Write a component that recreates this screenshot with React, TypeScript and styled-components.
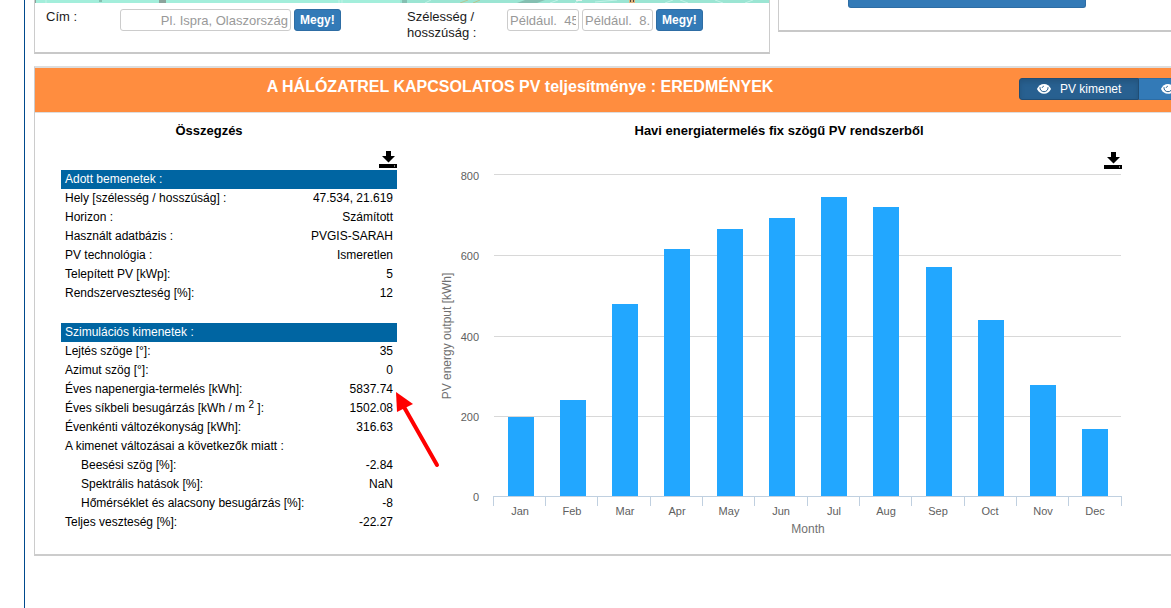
import React from "react";
import styled, { createGlobalStyle } from "styled-components";

const GlobalStyle = createGlobalStyle`
  * { box-sizing: border-box; }
  body {
    margin: 0;
    background: #fff;
    color: #000;
    font: 12px/18px "Liberation Sans", Arial, sans-serif;
    overflow: hidden;
  }
`;

const Page = styled.main`
  margin-left: 24px;
  padding-left: 9px;
  min-height: 100vh;
  border-left: 1px solid #004a8d;
  overflow: hidden;
`;

const TopRow = styled.div`
  display: grid;
  grid-template-columns: 736fr 393fr;
  gap: 8px;
  align-items: start;
`;

const Panel = styled.section`
  border: 1px solid #ccc;
  border-top: 0;
  border-bottom: 2px solid #c8c8c8;
`;

const SidePanel = styled(Panel)`
  border-right: 0;
  height: 32px;
  padding-left: 69px;
`;

const MapStrip = styled.svg`
  display: block;
  width: 100%;
  height: 3px;
  background: #a3eedb;
`;

const LocationForms = styled.div`
  display: flex;
  padding: 6px 11px 7px;
  min-height: 49px;
`;

const Form = styled.form<{ $basis: number; $labelWidth: number }>`
  display: flex;
  align-items: flex-start;
  gap: 3px;
  flex: 0 0 ${(p) => p.$basis}px;

  label {
    width: ${(p) => p.$labelWidth - 3}px;
    font-size: 13px;
    line-height: 16px;
    color: #1a1a1a;
  }
`;

const TextInput = styled.input<{ $width: number; $align?: string }>`
  width: ${(p) => p.$width}px;
  height: 22px;
  padding: 0 2px;
  border: 1px solid #ccc;
  border-radius: 3px;
  font: inherit;
  font-size: 13px;
  text-align: ${(p) => p.$align || "left"};

  &::placeholder {
    color: #999;
    opacity: 1;
  }
`;

const Button = styled.button`
  height: 22px;
  padding: 0 5px;
  border: 1px solid #2e6da4;
  border-radius: 3px;
  background: #337ab7;
  color: #fff;
  font: bold 12px/18px "Liberation Sans", Arial, sans-serif;
  white-space: nowrap;
`;

const WideButton = styled(Button)`
  display: block;
  width: 238px;
  height: 8px;
  border-top: 0;
  border-radius: 0 0 3px 3px;
`;

const Results = styled.section`
  margin-top: 12px;
  border: solid #ccc;
  border-width: 2px 0 2px 1px;
  border-top-color: #ddd;
`;

const ResultsHeader = styled.header`
  display: flex;
  height: 45px;
  padding-top: 10px;
  border-bottom: 1px solid #ddd;
  background: #ff8d3f;
`;

const Title = styled.h1`
  flex: 1;
  margin: 0;
  padding-right: 14px;
  color: #fff;
  font-size: 16px;
  line-height: 18px;
  text-align: center;
`;

const ButtonGroup = styled.div`
  display: flex;
  width: 152px;
  overflow: hidden;
`;

const TabButton = styled(Button)<{ $active?: boolean }>`
  display: flex;
  flex: none;
  align-items: center;
  gap: 9px;
  width: 120px;
  padding: 0 17px;
  font-weight: normal;
  border-radius: ${(p) => (p.$active ? "3px 0 0 3px" : "0")};
  border-color: ${(p) => (p.$active ? "#204d74" : "#2e6da4")};
  border-left-width: ${(p) => (p.$active ? "1px" : "0")};
  background: ${(p) => (p.$active ? "#286090" : "#337ab7")};
  box-shadow: ${(p) => (p.$active ? "inset 0 3px 5px rgba(0, 0, 0, 0.125)" : "none")};
  padding-left: ${(p) => (p.$active ? "17px" : "22px")};

  svg { flex: none; }
`;

const ResultsBody = styled.div`
  display: flex;
  gap: 35px;
  padding: 9px 45px 14px 26px;
`;

const Summary = styled.div`
  width: 336px;
  flex: none;
`;

const Heading = styled.h2<{ $inset?: number }>`
  margin: 0;
  padding-right: ${(p) => p.$inset || 0}px;
  font-size: 13px;
  line-height: 18px;
  text-align: center;
`;

const IconButton = styled.button`
  display: block;
  width: 18px;
  height: 18px;
  padding: 0;
  border: 0;
  background: none;
`;

const Tools = styled.div`
  display: flex;
  justify-content: flex-end;
  height: 30px;
  padding-top: 10px;
`;

const DataTable = styled.table`
  width: 100%;
  border-collapse: collapse;
  margin-bottom: 20px;

  &:last-of-type { margin-bottom: 0; }

  th, td {
    height: 19px;
    padding: 0 4px;
    font-weight: normal;
    line-height: 19px;
    text-align: left;
    white-space: nowrap;
  }
  thead th {
    background: #0065a2;
    color: #fff;
  }
  td { text-align: right; }
  sup { line-height: 0; font-size: 10px; vertical-align: 4px; }
`;

const RowLabel = styled.span<{ $indent?: boolean }>`
  padding-left: ${(p) => (p.$indent ? 16 : 0)}px;
`;

const ChartArea = styled.div`
  position: relative;
  flex: 1;
  min-width: 0;
`;

const ChartDownload = styled(IconButton)`
  position: absolute;
  top: 29px;
  right: 4px;
`;

const ChartSvg = styled.svg`
  display: block;
  width: 100%;
  font-family: "Liberation Sans", Arial, sans-serif;
`;

const TableWrap = styled.div`
  position: relative;
`;

const Arrow = styled.svg`
  position: absolute;
  left: 334px;
  top: 220px;
  overflow: visible;
`;

type Row = { label: React.ReactNode; value?: string; indent?: boolean };

const inputs: Row[] = [
  { label: "Hely [szélesség / hosszúság] :", value: "47.534, 21.619" },
  { label: "Horizon :", value: "Számított" },
  { label: "Használt adatbázis :", value: "PVGIS-SARAH" },
  { label: "PV technológia :", value: "Ismeretlen" },
  { label: "Telepített PV [kWp]:", value: "5" },
  { label: "Rendszerveszteség [%]:", value: "12" },
];

const outputs: Row[] = [
  { label: "Lejtés szöge [°]:", value: "35" },
  { label: "Azimut szög [°]:", value: "0" },
  { label: "Éves napenergia-termelés [kWh]:", value: "5837.74" },
  { label: <>Éves síkbeli besugárzás [kWh / m <sup>2</sup> ]:</>, value: "1502.08" },
  { label: "Évenkénti változékonyság [kWh]:", value: "316.63" },
  { label: "A kimenet változásai a következők miatt :" },
  { label: "Beesési szög [%]:", value: "-2.84", indent: true },
  { label: "Spektrális hatások [%]:", value: "NaN", indent: true },
  { label: "Hőmérséklet és alacsony besugárzás [%]:", value: "-8", indent: true },
  { label: "Teljes veszteség [%]:", value: "-22.27" },
];

const months: [string, number][] = [
  ["Jan", 198], ["Feb", 240], ["Mar", 479], ["Apr", 616], ["May", 666], ["Jun", 693],
  ["Jul", 745], ["Aug", 720], ["Sep", 571], ["Oct", 439], ["Nov", 277], ["Dec", 168],
];

const Eye = () => (
  <svg width="14" height="12" viewBox="0 0 14 12">
    <path fill="#fff" d="M7 1C3.900 1 1.500 3 .3 5.300c-.2.400-.2.800 0 1.200C1.500 8.800 3.900 10.800 7 10.800s5.500-2 6.700-4.300c.2-.4.2-.8 0-1.200C12.500 3 10.100 1 7 1Z" />
    <path fill="none" stroke="#286090" strokeWidth="1" d="M3 4.200C2.600 6.800 4.600 8.700 7 8.700s4.400-1.900 4-4.500" />
    <path fill="none" stroke="#286090" strokeWidth="1" d="M5.300 4.900c0-1 .6-1.600 1.600-1.600" />
  </svg>
);

const Download = () => (
  <svg width="18" height="18" viewBox="0 0 18 18">
    <path d="M7 1h5v5h4L9.500 12.500 3 6h4ZM0 14h18v4H0Z" />
    <path fill="#fff" d="M15 15.500h1v1h-1Z" />
  </svg>
);

function InfoTable({ title, rows }: { title: string; rows: Row[] }) {
  return (
    <DataTable>
      <thead><tr><th colSpan={2}>{title}</th></tr></thead>
      <tbody>
        {rows.map((r, i) => (
          <tr key={i}>
            <th scope="row"><RowLabel $indent={r.indent}>{r.label}</RowLabel></th>
            <td>{r.value}</td>
          </tr>
        ))}
      </tbody>
    </DataTable>
  );
}

function EnergyChart() {
  const left = 61;
  const base = 356;
  const step = 628 / 12;
  const y = (v: number) => Math.round(base - (v * 321) / 800);
  return (
    <ChartSvg viewBox="0 0 694 400" role="img" aria-label="PV energy output">
      {[800, 600, 400, 200, 0].map((v) => (
        <g key={v}>
          {v > 0 && <path d={`M62 ${y(v) + (v === 800 ? -0.5 : 0.5)}H689`} stroke="#d8d8d8" />}
          <text x="47" y={y(v) + 5} fontSize="11" fill="#606060" textAnchor="end">{v}</text>
        </g>
      ))}
      {months.map(([name, v], i) => (
        <g key={name}>
          <rect x={Math.floor(76 + i * 52.25)} y={y(v)} width="26" height={base - y(v)} fill="#22a7ff" />
          <text x={Math.floor(88.5 + i * 52.25)} y="375" fontSize="11" fill="#606060" textAnchor="middle">{name}</text>
        </g>
      ))}
      <path
        d={`M61 ${base + 0.5}H690` + Array.from({ length: 13 }, (_, i) => `M${Math.floor(left + i * step) + 0.5} ${base}v10`).join("")}
        stroke="#c0d0e0"
        fill="none"
      />
      <text x="376" y="393" fontSize="12" fill="#707070" textAnchor="middle">Month</text>
      <text transform="translate(19 196) rotate(-90)" fontSize="12" fill="#707070" textAnchor="middle">PV energy output [kWh]</text>
    </ChartSvg>
  );
}

export default function App() {
  return (
    <>
      <GlobalStyle />
      <Page>
        <TopRow>
          <Panel>
            <MapStrip viewBox="0 0 734 3" preserveAspectRatio="none">
              <path fill="#9be5d3" d="M365 0h369v3H365z" />
              <path fill="#8ba39b" d="M0 0h1v3H0zM124 0h7v3h-7z" />
              <path fill="#85bfb1" d="M64 0h3v2h-3zM367 0h5v3h-5zM482 3l8-3h20l-8 3z" />
              <path stroke="#c2f2e7" d="M11 0v3M304 0v3M307 0v3M390 3l6-3M515 3l8-3M540 3l4-3M560 2l22-2M630 3l8-3M645 0l8 3M680 0l8 3M710 3l8-3" />
              <path stroke="#b8c58f" d="M425 3l8-3M438 3l7-3" />
              <path fill="#e7f3ef" d="M541 0h6v1h-6z" />
              <path fill="#dfb47d" d="M594 0h6v3h-6z" />
              <path fill="#51483d" d="M595 0h1v2h-1zM598 0h1v2h-1z" />
            </MapStrip>
            <LocationForms>
              <Form $basis={361} $labelWidth={74}>
                <label htmlFor="address">Cím :</label>
                <TextInput id="address" $width={171} $align="right" placeholder="Pl. Ispra, Olaszország" />
                <Button type="button">Megy!</Button>
              </Form>
              <Form $basis={300} $labelWidth={100}>
                <label htmlFor="lat">Szélesség / hosszúság :</label>
                <TextInput id="lat" $width={72} placeholder="Például.  45.815" />
                <TextInput aria-label="Hosszúság" $width={71} placeholder="Például.  8.611" />
                <Button type="button">Megy!</Button>
              </Form>
            </LocationForms>
          </Panel>
          <SidePanel><WideButton type="button" aria-label="PVGIS" /></SidePanel>
        </TopRow>
        <Results>
          <ResultsHeader>
            <Title>A HÁLÓZATREL KAPCSOLATOS PV teljesítménye : EREDMÉNYEK</Title>
            <ButtonGroup>
              <TabButton type="button" $active><Eye />PV kimenet</TabButton>
              <TabButton type="button" aria-label="Sugárzás"><Eye /></TabButton>
            </ButtonGroup>
          </ResultsHeader>
          <ResultsBody>
            <Summary>
              <Heading $inset={40}>Összegzés</Heading>
              <Tools><IconButton type="button" aria-label="Letöltés"><Download /></IconButton></Tools>
              <TableWrap>
                <InfoTable title="Adott bemenetek :" rows={inputs} />
                <InfoTable title="Szimulációs kimenetek :" rows={outputs} />
                <Arrow width="44" height="78" viewBox="0 0 44 78">
                  <path d="M9 17L42 75" stroke="#f00" strokeWidth="4" strokeLinecap="round" />
                  <path d="M1 2L18 14L2 22Z" fill="#f00" />
                </Arrow>
              </TableWrap>
            </Summary>
            <ChartArea>
              <Heading>Havi energiatermelés fix szögű PV rendszerből</Heading>
              <ChartDownload type="button" aria-label="Diagram letöltése"><Download /></ChartDownload>
              <EnergyChart />
            </ChartArea>
          </ResultsBody>
        </Results>
      </Page>
    </>
  );
}
